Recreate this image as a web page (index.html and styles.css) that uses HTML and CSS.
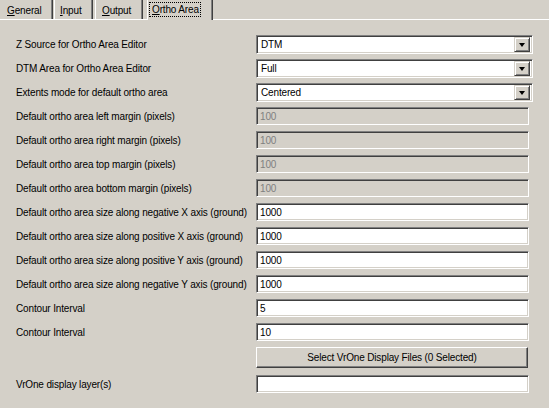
FILE: index.html
```html
<!DOCTYPE html>
<html>
<head>
<meta charset="utf-8">
<link rel="stylesheet" href="styles.css">
</head>
<body>
<div class="tabs">
  <div class="tab tab-general"><span><u>G</u>eneral</span></div>
  <div class="tab tab-input"><span><u>I</u>nput</span></div>
  <div class="tab tab-output"><span><u>O</u>utput</span></div>
  <div class="tab tab-ortho active"><span class="focus"><u>O</u>rtho Area</span></div>
</div>
<div class="form">
  <div class="row row-combo">
    <div class="label">Z Source for Ortho Area Editor</div>
    <div class="combo"><span class="value">DTM</span><span class="drop"><span class="arrow"></span></span></div>
  </div>
  <div class="row row-combo">
    <div class="label">DTM Area for Ortho Area Editor</div>
    <div class="combo"><span class="value">Full</span><span class="drop"><span class="arrow"></span></span></div>
  </div>
  <div class="row row-combo">
    <div class="label">Extents mode for default ortho area</div>
    <div class="combo"><span class="value">Centered</span><span class="drop"><span class="arrow"></span></span></div>
  </div>
  <div class="row row-edit">
    <div class="label">Default ortho area left margin (pixels)</div>
    <div class="edit disabled">100</div>
  </div>
  <div class="row row-edit">
    <div class="label">Default ortho area right margin (pixels)</div>
    <div class="edit disabled">100</div>
  </div>
  <div class="row row-edit">
    <div class="label">Default ortho area top margin (pixels)</div>
    <div class="edit disabled">100</div>
  </div>
  <div class="row row-edit">
    <div class="label">Default ortho area bottom margin (pixels)</div>
    <div class="edit disabled">100</div>
  </div>
  <div class="row row-edit">
    <div class="label">Default ortho area size along negative X axis (ground)</div>
    <div class="edit">1000</div>
  </div>
  <div class="row row-edit">
    <div class="label">Default ortho area size along positive X axis (ground)</div>
    <div class="edit">1000</div>
  </div>
  <div class="row row-edit">
    <div class="label">Default ortho area size along positive Y axis (ground)</div>
    <div class="edit">1000</div>
  </div>
  <div class="row row-edit">
    <div class="label">Default ortho area size along negative Y axis (ground)</div>
    <div class="edit">1000</div>
  </div>
  <div class="row row-edit">
    <div class="label">Contour Interval</div>
    <div class="edit">5</div>
  </div>
  <div class="row row-edit">
    <div class="label">Contour Interval</div>
    <div class="edit">10</div>
  </div>
  <div class="row row-button">
    <div class="label"></div>
    <div class="button">Select VrOne Display Files (0 Selected)</div>
  </div>
  <div class="row row-edit">
    <div class="label">VrOne display layer(s)</div>
    <div class="edit"></div>
  </div>
</div>
</body>
</html>
```
FILE: styles.css
```css
html, body {
  margin: 0;
  padding: 0;
  background: #d4d0c8;
}
body {
  width: 549px;
  height: 408px;
  overflow: hidden;
  font-family: "Liberation Sans", Arial, sans-serif;
  font-size: 10px;
  letter-spacing: -0.15px;
  color: #000;
}
u {
  text-decoration: underline;
  text-underline-offset: 1px;
}

/* Tabs */
.tabs {
  display: flex;
  height: 19px;
  border-bottom: 1px solid #fff;
  align-items: stretch;
}
.tab {
  box-sizing: border-box;
  border-left: 1px solid #fff;
  border-right: 1px solid #404040;
  box-shadow: inset -1px 0 #808080;
  display: flex;
  align-items: center;
  padding-top: 1px;
}
.tab-general {
  width: 53px;
  border-left: none;
  padding-left: 7px;
}
.tab-input {
  width: 39px;
  margin-left: 1px;
  padding-left: 5px;
}
.tab-output {
  width: 48px;
  margin-left: 2px;
  padding-left: 6px;
}
.tab-ortho {
  width: 66px;
  margin-left: 4px;
  padding-left: 2px;
}
.tab.active {
  height: 20px;
  margin-bottom: -1px;
  background: #d4d0c8;
  position: relative;
  padding-top: 0;
  padding-bottom: 1px;
}
.focus {
  outline: 1px dotted #000;
  outline-offset: 0;
  padding: 1px 1px 1px 2px;
  line-height: 11px;
}

/* Form */
.form {
  padding: 15px 0 0 16px;
}
.row {
  display: flex;
  align-items: center;
}
.row-combo { margin-bottom: 5px; }
.row-edit { margin-bottom: 6px; }
.row-button { margin-bottom: 7px; }
.label {
  width: 240px;
  flex: none;
  white-space: nowrap;
}

.combo, .edit {
  box-sizing: border-box;
  background: #fff;
  border: 1px solid;
  border-color: #808080 #fff #fff #808080;
  box-shadow: inset 1px 1px #404040, inset -1px -1px #d4d0c8;
  display: flex;
  align-items: center;
}
.combo {
  width: 277px;
  height: 19px;
  padding: 2px 2px 2px 4px;
}
.combo .value {
  flex: 1;
}
.drop {
  box-sizing: border-box;
  width: 16px;
  height: 15px;
  background: #d4d0c8;
  border: 1px solid;
  border-color: #d4d0c8 #404040 #404040 #d4d0c8;
  box-shadow: inset 1px 1px #fff, inset -1px -1px #808080;
  display: flex;
  align-items: center;
  justify-content: center;
}
.arrow {
  width: 0;
  height: 0;
  border-left: 3.5px solid transparent;
  border-right: 3.5px solid transparent;
  border-top: 4px solid #000;
  margin-top: 1px;
}

.edit {
  width: 273px;
  height: 18px;
  padding: 0 2px 0 3px;
}
.edit.disabled {
  background: #d4d0c8;
  color: #808080;
}

.button {
  box-sizing: border-box;
  width: 272px;
  height: 21px;
  border: 1px solid;
  border-color: #fff #404040 #404040 #fff;
  box-shadow: inset -1px -1px #808080;
  display: flex;
  align-items: center;
  justify-content: center;
}
```
